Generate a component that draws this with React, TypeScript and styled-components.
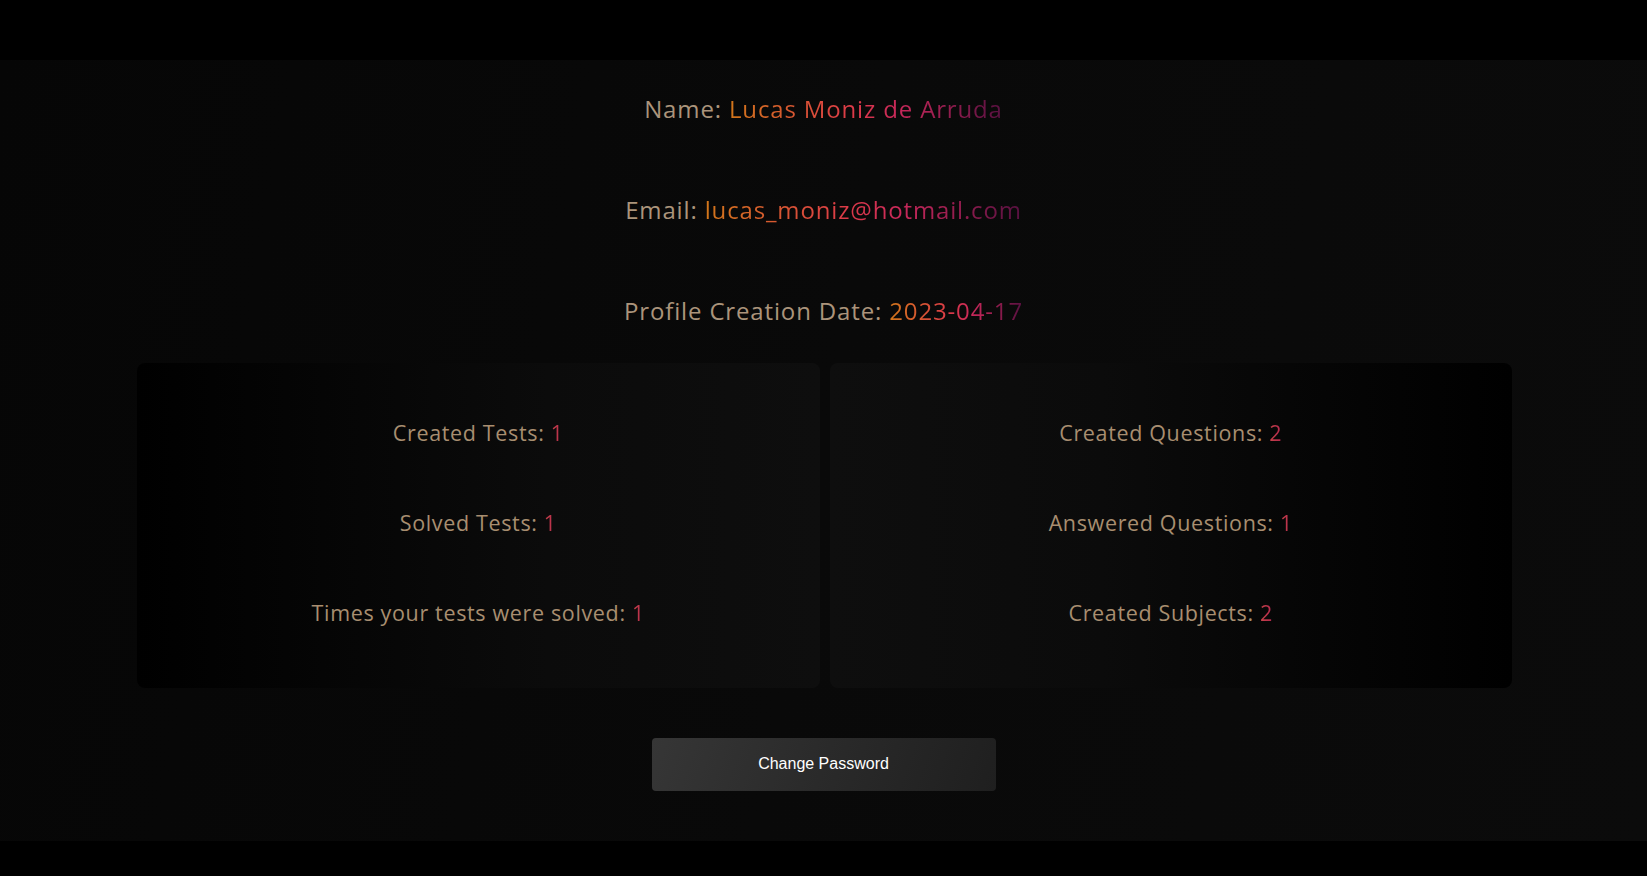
import React from "react";
import styled, { createGlobalStyle } from "styled-components";

const GlobalStyle = createGlobalStyle`
  html, body {
    margin: 0;
    padding: 0;
    background: #000;
  }
  body {
    font-family: "Open Sans", "Noto Sans", sans-serif;
  }
  * { box-sizing: border-box; }
`;

const Page = styled.div`
  display: flex;
  flex-direction: column;
  width: 100%;
  min-height: 876px;
  background: #000;
`;

const TopBar = styled.header`
  height: 60px;
  background: #000;
`;

const Main = styled.main`
  height: 781px;
  display: flex;
  flex-direction: column;
  align-items: center;
  padding-top: 33px;
  background: linear-gradient(100deg, #060606 0%, #090909 50%, #0b0b0b 100%);
`;

const InfoList = styled.section`
  display: flex;
  flex-direction: column;
  align-items: center;
  gap: 69px;
`;

const InfoRow = styled.p`
  margin: 0;
  font-size: 24px;
  line-height: 32px;
  letter-spacing: 0.85px;
  color: #ab947b;
  white-space: nowrap;
`;

const Value = styled.span`
  background: linear-gradient(90deg, #d2761a 0%, #dc3a48 45%, #c8285a 62%, #561040 100%);
  -webkit-background-clip: text;
  background-clip: text;
  color: transparent;
`;

const StatValue = styled.span`
  background: linear-gradient(90deg, #c84548 0%, #b0244e 100%);
  -webkit-background-clip: text;
  background-clip: text;
  color: transparent;
`;

const Cards = styled.section`
  margin: 36px 0 0 2px;
  width: 1375px;
  display: grid;
  grid-template-columns: 1fr 1fr;
  gap: 10px;
`;

const Card = styled.div<{ $mirror?: boolean }>`
  height: 325px;
  padding-bottom: 5px;
  border-radius: 8px;
  display: flex;
  flex-direction: column;
  align-items: center;
  justify-content: center;
  gap: 60px;
  background: linear-gradient(
    ${(p) => (p.$mirror ? "270deg" : "90deg")},
    #000 0%,
    #0b0b0b 60%,
    #0e0e0e 100%
  );
`;

const Stat = styled.p`
  margin: 0;
  font-size: 21.5px;
  line-height: 30px;
  letter-spacing: 0.65px;
  color: #a88e70;
  white-space: nowrap;
`;

const Button = styled.button`
  margin-top: 50px;
  width: 344px;
  height: 53px;
  padding: 0 0 2px;
  border: none;
  border-radius: 4px;
  background: linear-gradient(110deg, #363636 0%, #2a2a2a 50%, #1f1f1f 100%);
  color: #fff;
  font-family: Arial, "Liberation Sans", sans-serif;
  font-size: 16px;
  cursor: pointer;
`;

const info = [
  { label: "Name:", value: "Lucas Moniz de Arruda" },
  { label: "Email:", value: "lucas_moniz@hotmail.com" },
  { label: "Profile Creation Date:", value: "2023-04-17" },
];

const leftStats = [
  { label: "Created Tests:", value: 1 },
  { label: "Solved Tests:", value: 1 },
  { label: "Times your tests were solved:", value: 1 },
];

const rightStats = [
  { label: "Created Questions:", value: 2 },
  { label: "Answered Questions:", value: 1 },
  { label: "Created Subjects:", value: 2 },
];

export default function App() {
  return (
    <>
      <GlobalStyle />
      <Page>
        <TopBar />
        <Main>
          <InfoList>
            {info.map((i) => (
              <InfoRow key={i.label}>
                {i.label} <Value>{i.value}</Value>
              </InfoRow>
            ))}
          </InfoList>
          <Cards>
            <Card>
              {leftStats.map((s) => (
                <Stat key={s.label}>
                  {s.label} <StatValue>{s.value}</StatValue>
                </Stat>
              ))}
            </Card>
            <Card $mirror>
              {rightStats.map((s) => (
                <Stat key={s.label}>
                  {s.label} <StatValue>{s.value}</StatValue>
                </Stat>
              ))}
            </Card>
          </Cards>
          <Button>Change Password</Button>
        </Main>
      </Page>
    </>
  );
}
